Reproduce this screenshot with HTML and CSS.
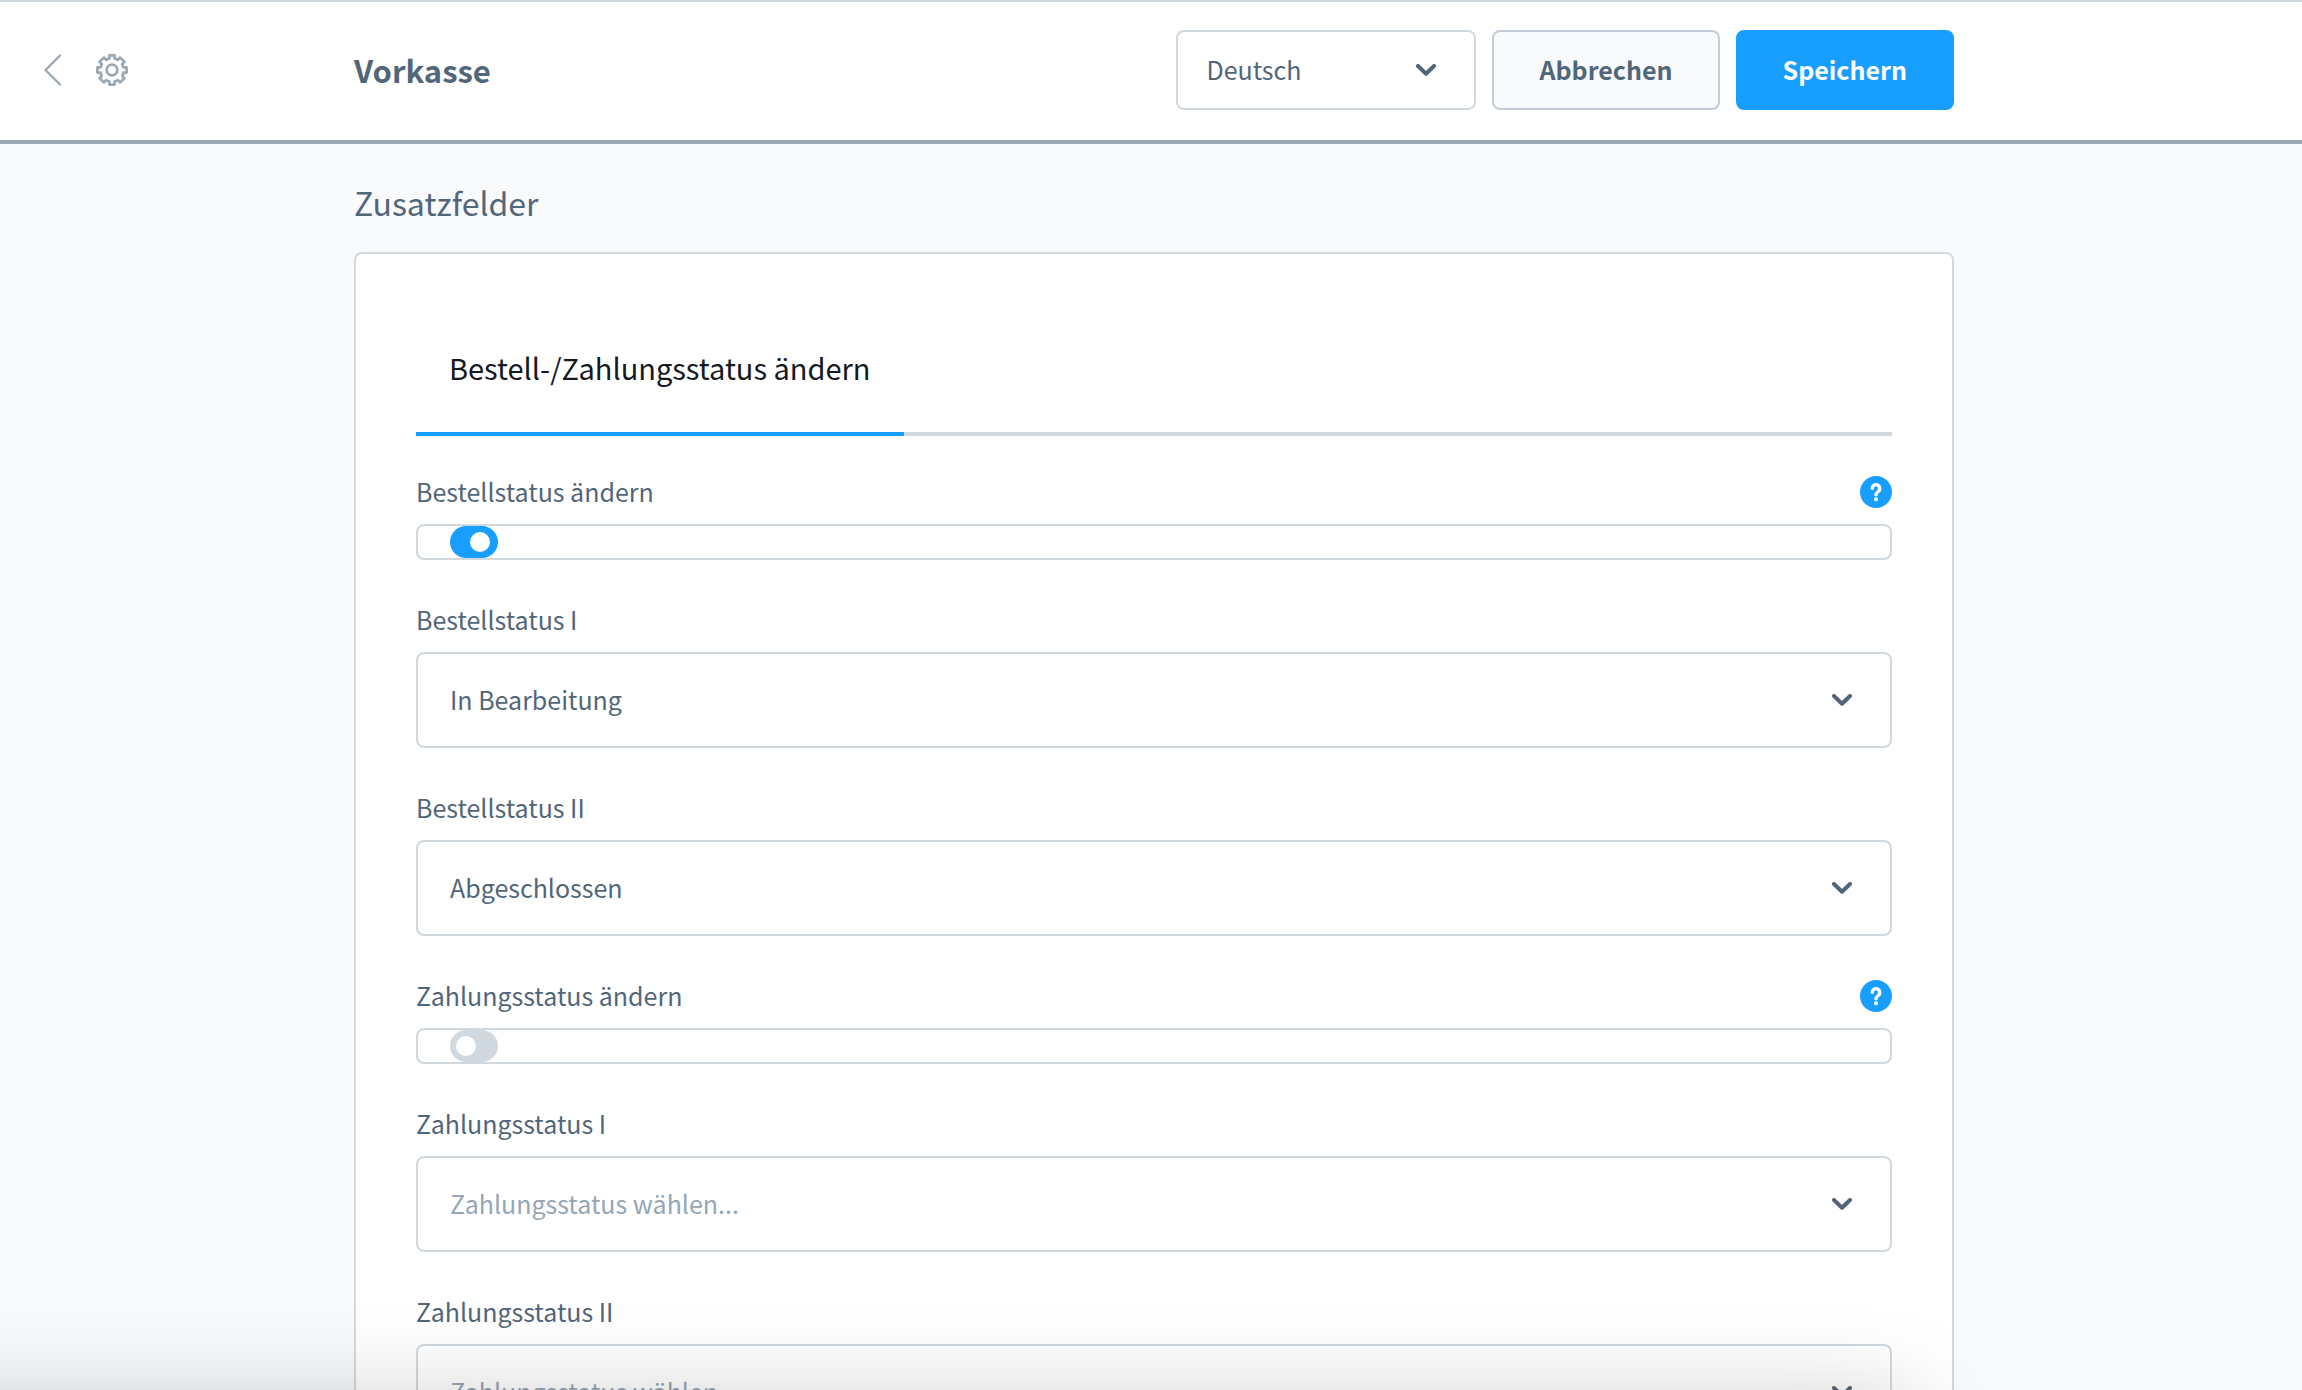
FILE: index.html
```html
<!DOCTYPE html>
<html lang="de">
<head>
<meta charset="utf-8">
<title>Vorkasse</title>
<meta name="viewport" content="width=device-width, initial-scale=1">
<link rel="stylesheet" href="styles.css">
</head>
<body>
<svg class="sprite" aria-hidden="true">
  <symbol id="chevron" viewBox="0 0 20 12"><path d="M2 2 10 9.700 18 2" fill="none" stroke="currentColor" stroke-width="4" stroke-linecap="round" stroke-linejoin="round"/></symbol>
  <symbol id="help" viewBox="0 0 32 32"><circle cx="16" cy="16" r="16" fill="#189eff"/><path d="M12.200 12.400a3.800 3.800 0 1 1 6.100 3.100c-1.500 1.100-2.300 1.700-2.300 3.200" fill="none" stroke="#fff" stroke-width="3.400" stroke-linecap="round" stroke-linejoin="round"/><circle cx="16" cy="23.200" r="2" fill="#fff"/></symbol>
</svg>

<div class="page">
  <header class="header">
    <nav class="header-nav">
      <a class="icon-link" href="#" aria-label="Zurück">
        <svg class="icon-back" viewBox="0 0 18 32"><path d="M16 1.500 1.500 16 16 30.500" fill="none" stroke="currentColor" stroke-width="2.300" stroke-linecap="round" stroke-linejoin="round"/></svg>
      </a>
      <a class="icon-link" href="#" aria-label="Einstellungen">
        <svg class="icon-gear" viewBox="0 0 32 32"><g fill="none" stroke="currentColor" stroke-width="2.700" stroke-linejoin="round"><path d="M13.400 1.400h5.200v3.100a12 12 0 0 1 3.200 1.300l2.400-2.200 4.200 4.200-2.200 2.400a12 12 0 0 1 1.300 3.200h3.100v5.200h-3.100a12 12 0 0 1-1.300 3.200l2.200 2.400-4.200 4.200-2.400-2.200a12 12 0 0 1-3.200 1.300v3.100h-5.200v-3.100a12 12 0 0 1-3.200-1.300l-2.400 2.200-4.200-4.200 2.200-2.400a12 12 0 0 1-1.300-3.200H1.400v-5.200h3.100a12 12 0 0 1 1.300-3.200L3.600 7.800l4.200-4.200 2.400 2.200a12 12 0 0 1 3.200-1.300z"/><circle cx="16" cy="16" r="5.300"/></g></svg>
      </a>
    </nav>
    <div class="header-bar">
      <h1 class="title">Vorkasse</h1>
      <div class="actions">
        <div class="select select-small">
          <select aria-label="Sprache"><option>Deutsch</option></select>
          <svg class="chevron"><use href="#chevron"/></svg>
        </div>
        <button type="button" class="button">Abbrechen</button>
        <button type="submit" form="fields" class="button button-primary">Speichern</button>
      </div>
    </div>
  </header>

  <main class="content">
    <div class="content-column">
      <h2 class="section-title">Zusatzfelder</h2>
      <form class="card" id="fields">
        <div class="tabs" role="tablist">
          <button type="button" class="tab" role="tab" aria-selected="true">Bestell-/Zahlungsstatus ändern</button>
        </div>

        <div class="field">
          <div class="field-head">
            <label for="order-change">Bestellstatus ändern</label>
            <button type="button" class="help" aria-label="Hilfe"><svg><use href="#help"/></svg></button>
          </div>
          <div class="switch-box"><input class="switch" type="checkbox" id="order-change" checked></div>
        </div>

        <div class="field">
          <div class="field-head"><label for="order-1">Bestellstatus I</label></div>
          <div class="select">
            <select id="order-1"><option>In Bearbeitung</option></select>
            <svg class="chevron"><use href="#chevron"/></svg>
          </div>
        </div>

        <div class="field">
          <div class="field-head"><label for="order-2">Bestellstatus II</label></div>
          <div class="select">
            <select id="order-2"><option>Abgeschlossen</option></select>
            <svg class="chevron"><use href="#chevron"/></svg>
          </div>
        </div>

        <div class="field">
          <div class="field-head">
            <label for="pay-change">Zahlungsstatus ändern</label>
            <button type="button" class="help" aria-label="Hilfe"><svg><use href="#help"/></svg></button>
          </div>
          <div class="switch-box"><input class="switch" type="checkbox" id="pay-change"></div>
        </div>

        <div class="field">
          <div class="field-head"><label for="pay-1">Zahlungsstatus I</label></div>
          <div class="select">
            <select id="pay-1" class="is-empty"><option>Zahlungsstatus wählen...</option></select>
            <svg class="chevron"><use href="#chevron"/></svg>
          </div>
        </div>

        <div class="field">
          <div class="field-head"><label for="pay-2">Zahlungsstatus II</label></div>
          <div class="select">
            <select id="pay-2" class="is-empty"><option>Zahlungsstatus wählen...</option></select>
            <svg class="chevron"><use href="#chevron"/></svg>
          </div>
        </div>
      </form>
    </div>
  </main>
</div>
<div class="bottom-shadow"></div>
</body>
</html>
```
FILE: styles.css
```css
:root {
  --text: #52667a;
  --muted: #9aa8b5;
  --placeholder: #94a6b8;
  --line: #d1d9e0;
  --blue: #189eff;
  --surface: #f9fafc;
}

* {
  box-sizing: border-box;
}

body {
  margin: 0;
  background: var(--surface);
  color: var(--text);
  font: 400 25px/30px "Source Sans Pro", "Noto Sans CJK SC", sans-serif;
}

button,
select {
  margin: 0;
  color: inherit;
  font: inherit;
}

button {
  padding: 0;
  border: 0;
  background: none;
  cursor: pointer;
}

svg {
  display: block;
}

.sprite {
  position: absolute;
  width: 0;
  height: 0;
}

.page {
  display: flex;
  flex-direction: column;
  height: 100vh;
}

/* Header and content share one grid, so the title lines up with the card. */
.header,
.content {
  display: grid;
  grid-template-columns: 1fr minmax(0, 1600px) 1fr;
  padding-left: 6px;
}

.header {
  flex: none;
  align-items: center;
  height: 144px;
  padding-bottom: 2px;
  border-top: 2px solid var(--line);
  border-bottom: 4px solid var(--muted);
  background: #fff;
}

.header-nav {
  display: flex;
  gap: 34px;
  padding-left: 38px;
}

.icon-link {
  color: var(--muted);
}

.icon-back {
  width: 18px;
  height: 32px;
}

.icon-gear {
  width: 32px;
  height: 32px;
}

.header-bar {
  display: flex;
  align-items: center;
  justify-content: space-between;
}

.title {
  margin: 0;
  font-size: 31px;
  font-weight: 600;
  line-height: 40px;
}

.actions {
  display: flex;
  gap: 16px;
}

.button {
  height: 80px;
  padding: 0 45px 2px;
  border: 2px solid #c2ccd9;
  border-radius: 8px;
  background: var(--surface);
  font-weight: 600;
}

.button-primary {
  border-color: var(--blue);
  background: var(--blue);
  color: #fff;
}

.content {
  flex: 1;
  min-height: 0;
  overflow-y: auto;
  scrollbar-width: none;
}

.content-column {
  grid-column: 2;
  padding: 38px 0;
}

.section-title {
  margin: 0 0 30px;
  font-size: 32px;
  font-weight: 400;
  line-height: 40px;
}

.card {
  display: flex;
  flex-direction: column;
  gap: 44px;
  padding: 88px 60px 60px;
  border: 2px solid var(--line);
  border-radius: 8px;
  background: #fff;
}

.tabs {
  display: flex;
  margin-bottom: -4px;
  box-shadow: inset 0 -4px var(--line);
}

.tab {
  height: 94px;
  padding: 0 33px 40px;
  border-bottom: 4px solid var(--blue);
  color: #141a1f;
  font-size: 29px;
}

.field {
  display: flex;
  flex-direction: column;
  gap: 16px;
}

.field-head {
  display: flex;
  align-items: flex-start;
  justify-content: space-between;
  min-height: 32px;
}

.help,
.help svg {
  width: 32px;
  height: 32px;
}

.select {
  display: grid;
  align-items: center;
}

.select select,
.chevron {
  grid-area: 1 / 1;
}

.select select {
  width: 100%;
  height: 96px;
  padding: 0 80px 2px 32px;
  border: 2px solid var(--line);
  border-radius: 8px;
  background: #fff;
  line-height: 40px;
  appearance: none;
}

.select .is-empty {
  color: var(--placeholder);
}

.chevron {
  justify-self: end;
  width: 20px;
  height: 12px;
  margin-right: 40px;
  color: var(--text);
  pointer-events: none;
}

.select-small {
  width: 300px;
}

.select-small select {
  height: 80px;
  padding-left: 28px;
}

.switch-box {
  display: flex;
  padding: 0 32px;
  border: 2px solid var(--line);
  border-radius: 8px;
}

.switch {
  display: flex;
  align-items: center;
  width: 48px;
  height: 32px;
  margin: 0;
  padding: 0 8px 0 6px;
  border-radius: 16px;
  background: var(--line);
  appearance: none;
}

.switch::before {
  width: 20px;
  height: 20px;
  border-radius: 50%;
  background: #fff;
  content: "";
}

.switch:checked {
  justify-content: flex-end;
  background: var(--blue);
}

/* Soft shade rising from the lower edge of the window. */
.bottom-shadow {
  position: fixed;
  right: 17%;
  bottom: -200px;
  left: -200px;
  height: 180px;
  box-shadow: 0 0 100px rgba(0, 0, 0, 0.25);
  pointer-events: none;
}
```
